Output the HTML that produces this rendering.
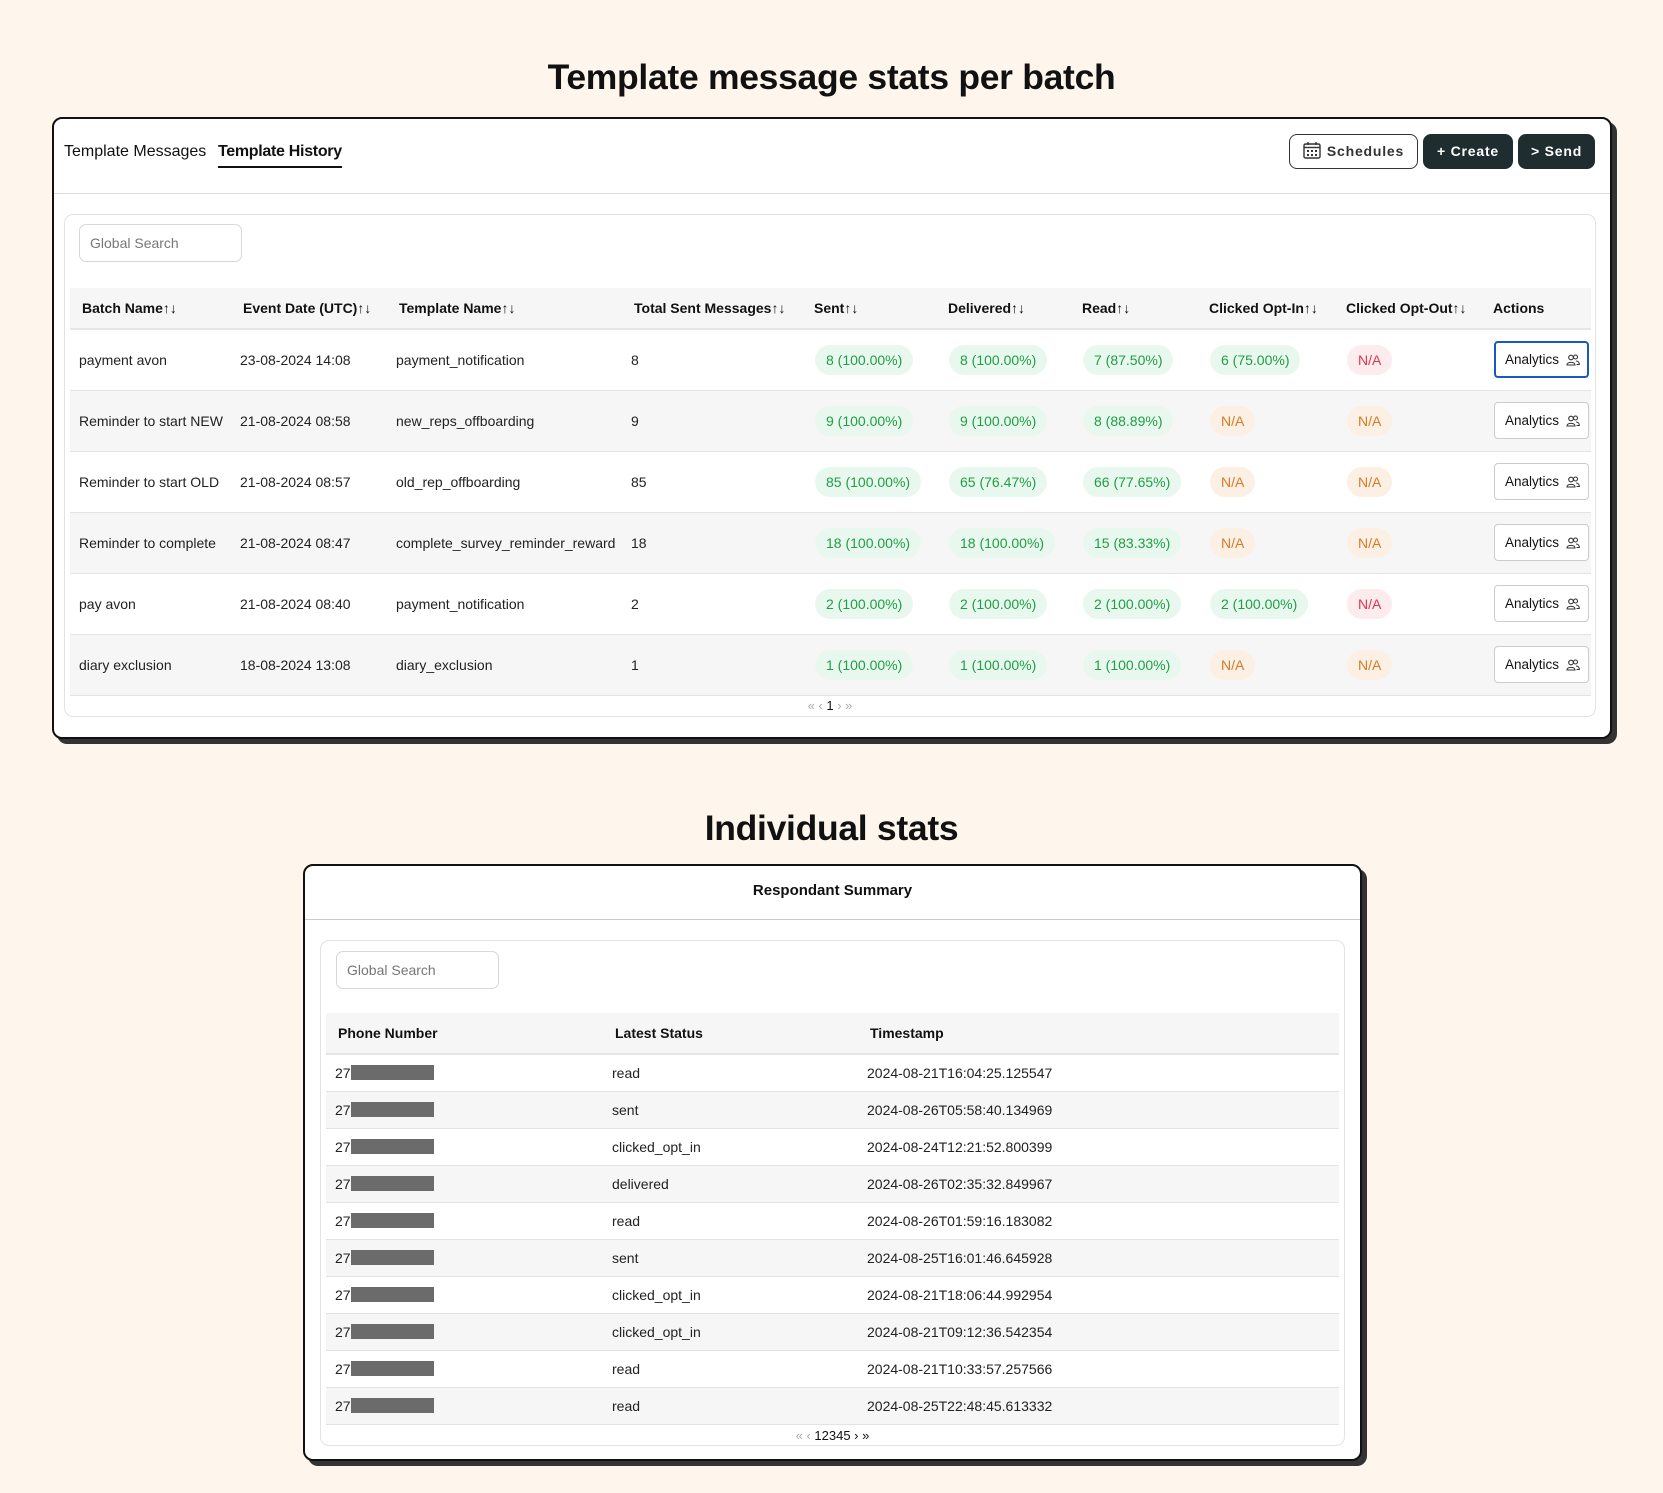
<!DOCTYPE html>
<html><head><meta charset="utf-8"><style>
*{box-sizing:border-box;margin:0;padding:0}
body{width:1663px;height:1493px;background:#fef6ec;font-family:"Liberation Sans",sans-serif;color:#222;position:relative;overflow:hidden}
.abs{position:absolute}
h1{position:absolute;left:0;width:1663px;text-align:center;font-size:35.5px;font-weight:700;color:#111;letter-spacing:-0.3px}
.card{position:absolute;background:#fff;border:2px solid #111;border-radius:10px;box-shadow:5px 5px 0 #333}
.inner{position:absolute;border:1px solid #e3e3e3;border-radius:9px;background:#fff}
.search{position:absolute;border:1px solid #d8d8d8;border-radius:7px;font-size:14px;color:#777;padding-left:10px;line-height:36px;height:38px;width:163px}
table{position:absolute;border-collapse:collapse;table-layout:fixed;font-size:14px}
th{text-align:left;font-weight:700;color:#111;background:#f6f6f6;height:41px;border-bottom:2px solid #e6e6e6;padding-left:12px;font-size:14px}
td{padding-left:9px;border-bottom:1px solid #e3e3e3;color:#222}
tr.g td{background:#f6f6f6}
.t1 td{height:61px}
.t1 td.p{padding-left:13px}
.pill{display:inline-block;height:30px;line-height:30px;padding:0 11px;border-radius:15px;font-size:14px}
.gr{background:#e9f8ee;color:#1f9e45}
.rd{background:#fdecee;color:#e0364a}
.or{background:#fcf0e4;color:#d47b27}
.an{display:inline-block;width:95px;height:37px;border:1px solid #ccc;border-radius:4px;line-height:35px;padding-left:10px;font-size:13.5px;color:#111;background:#fff}
.an.f{border:2px solid #1a56c4;line-height:33px;padding-left:9px}
.an svg{vertical-align:-2px;margin-left:3px}
.t2 td{height:37px;padding-left:9px}
.red{display:inline-block;width:83px;height:15px;background:#6b6b6b;vertical-align:-2px}
.btn{position:absolute;height:35px;border-radius:8px;font-size:14px;font-weight:700;letter-spacing:0.8px;line-height:33px;text-align:center}
.ar{font-weight:400}
</style></head><body>
<svg width="0" height="0" style="position:absolute"><defs><symbol id="pp" viewBox="0 0 14 12"><circle cx="5" cy="3.5" r="2.3" fill="none" stroke="#333" stroke-width="1.1"/><path d="M1 11 C1 7.5 9 7.5 9 11 Z" fill="none" stroke="#333" stroke-width="1.1"/><circle cx="9.5" cy="3" r="2" fill="none" stroke="#333" stroke-width="1.1"/><path d="M10 7 C12 7 13.3 8.5 13.3 10.5 L10.5 10.5" fill="none" stroke="#333" stroke-width="1.1"/></symbol></defs></svg>
<h1 style="top:57px">Template message stats per batch</h1>
<div class="card" style="left:52px;top:117px;width:1560px;height:622px">
 <div class="abs" style="left:10px;top:24px;font-size:16px;color:#111">Template Messages</div>
 <div class="abs" style="left:164px;top:24px;font-size:16px;font-weight:700;color:#111;border-bottom:2px solid #111;padding-bottom:5px;letter-spacing:-0.3px">Template History</div>
 <div class="btn" style="left:1235px;top:15px;width:129px;border:1px solid #333;color:#333;background:#fff">
  <svg width="18" height="17" viewBox="0 0 18 17" style="vertical-align:-3px;margin-right:6px"><rect x="1" y="2" width="16" height="14" rx="1.5" fill="none" stroke="#333" stroke-width="1.4"/><line x1="1" y1="5.5" x2="17" y2="5.5" stroke="#333" stroke-width="1.4"/><line x1="5" y1="0" x2="5" y2="3" stroke="#333" stroke-width="1.4"/><line x1="13" y1="0" x2="13" y2="3" stroke="#333" stroke-width="1.4"/><g fill="#333"><rect x="4" y="8" width="2" height="2"/><rect x="8" y="8" width="2" height="2"/><rect x="12" y="8" width="2" height="2"/><rect x="4" y="12" width="2" height="2"/><rect x="8" y="12" width="2" height="2"/><rect x="12" y="12" width="2" height="2"/></g></svg>Schedules</div>
 <div class="btn" style="left:1369px;top:15px;width:90px;background:#1f2d30;color:#fff;line-height:35px">+ Create</div>
 <div class="btn" style="left:1464px;top:15px;width:77px;background:#1f2d30;color:#fff;line-height:35px">&gt; Send</div>
 <div class="abs" style="left:0;top:74px;width:1556px;border-top:1px solid #ddd"></div>
 <div class="inner" style="left:10px;top:95px;width:1532px;height:503px">
  <div class="search" style="left:14px;top:9px">Global Search</div>
  <table class="t1" style="left:5px;top:73px;width:1521px">
   <colgroup><col style="width:161px"><col style="width:156px"><col style="width:235px"><col style="width:180px"><col style="width:134px"><col style="width:134px"><col style="width:127px"><col style="width:137px"><col style="width:147px"><col style="width:110px"></colgroup>
   <tr><th>Batch Name↑↓</th><th>Event Date (UTC)↑↓</th><th>Template Name↑↓</th><th>Total Sent Messages↑↓</th><th>Sent↑↓</th><th>Delivered↑↓</th><th>Read↑↓</th><th>Clicked Opt-In↑↓</th><th>Clicked Opt-Out↑↓</th><th>Actions</th></tr>
   <tr><td>payment avon</td><td>23-08-2024 14:08</td><td>payment_notification</td><td>8</td><td class="p"><span class="pill gr">8 (100.00%)</span></td><td class="p"><span class="pill gr">8 (100.00%)</span></td><td class="p"><span class="pill gr">7 (87.50%)</span></td><td class="p"><span class="pill gr">6 (75.00%)</span></td><td class="p"><span class="pill rd">N/A</span></td><td class="p"><span class="an f">Analytics <svg width="14" height="12"><use href="#pp"/></svg></span></td></tr>
   <tr class="g"><td>Reminder to start NEW</td><td>21-08-2024 08:58</td><td>new_reps_offboarding</td><td>9</td><td class="p"><span class="pill gr">9 (100.00%)</span></td><td class="p"><span class="pill gr">9 (100.00%)</span></td><td class="p"><span class="pill gr">8 (88.89%)</span></td><td class="p"><span class="pill or">N/A</span></td><td class="p"><span class="pill or">N/A</span></td><td class="p"><span class="an">Analytics <svg width="14" height="12"><use href="#pp"/></svg></span></td></tr>
   <tr><td>Reminder to start OLD</td><td>21-08-2024 08:57</td><td>old_rep_offboarding</td><td>85</td><td class="p"><span class="pill gr">85 (100.00%)</span></td><td class="p"><span class="pill gr">65 (76.47%)</span></td><td class="p"><span class="pill gr">66 (77.65%)</span></td><td class="p"><span class="pill or">N/A</span></td><td class="p"><span class="pill or">N/A</span></td><td class="p"><span class="an">Analytics <svg width="14" height="12"><use href="#pp"/></svg></span></td></tr>
   <tr class="g"><td>Reminder to complete</td><td>21-08-2024 08:47</td><td>complete_survey_reminder_reward</td><td>18</td><td class="p"><span class="pill gr">18 (100.00%)</span></td><td class="p"><span class="pill gr">18 (100.00%)</span></td><td class="p"><span class="pill gr">15 (83.33%)</span></td><td class="p"><span class="pill or">N/A</span></td><td class="p"><span class="pill or">N/A</span></td><td class="p"><span class="an">Analytics <svg width="14" height="12"><use href="#pp"/></svg></span></td></tr>
   <tr><td>pay avon</td><td>21-08-2024 08:40</td><td>payment_notification</td><td>2</td><td class="p"><span class="pill gr">2 (100.00%)</span></td><td class="p"><span class="pill gr">2 (100.00%)</span></td><td class="p"><span class="pill gr">2 (100.00%)</span></td><td class="p"><span class="pill gr">2 (100.00%)</span></td><td class="p"><span class="pill rd">N/A</span></td><td class="p"><span class="an">Analytics <svg width="14" height="12"><use href="#pp"/></svg></span></td></tr>
   <tr class="g"><td>diary exclusion</td><td>18-08-2024 13:08</td><td>diary_exclusion</td><td>1</td><td class="p"><span class="pill gr">1 (100.00%)</span></td><td class="p"><span class="pill gr">1 (100.00%)</span></td><td class="p"><span class="pill gr">1 (100.00%)</span></td><td class="p"><span class="pill or">N/A</span></td><td class="p"><span class="pill or">N/A</span></td><td class="p"><span class="an">Analytics <svg width="14" height="12"><use href="#pp"/></svg></span></td></tr>
  </table>
  <div class="abs" style="left:0;top:483px;width:1530px;text-align:center;font-size:13px;color:#aaa">«&nbsp;‹ <span style="color:#111">1</span> ›&nbsp;»</div>
 </div>
</div>

<h1 style="top:808px">Individual stats</h1>
<div class="card" style="left:303px;top:864px;width:1059px;height:597px">
 <div class="abs" style="left:0;top:16px;width:1055px;text-align:center;font-size:15px;font-weight:700;color:#111">Respondant Summary</div>
 <div class="abs" style="left:0;top:53px;width:1055px;border-top:1px solid #ccc"></div>
 <div class="inner" style="left:15px;top:74px;width:1025px;height:506px">
  <div class="search" style="left:15px;top:10px">Global Search</div>
  <table class="t2" style="left:5px;top:72px;width:1013px">
   <colgroup><col style="width:277px"><col style="width:255px"><col style="width:481px"></colgroup>
   <tr><th>Phone Number</th><th>Latest Status</th><th>Timestamp</th></tr>
   <tr><td>27<span class="red"></span></td><td>read</td><td>2024-08-21T16:04:25.125547</td></tr>
   <tr class="g"><td>27<span class="red"></span></td><td>sent</td><td>2024-08-26T05:58:40.134969</td></tr>
   <tr><td>27<span class="red"></span></td><td>clicked_opt_in</td><td>2024-08-24T12:21:52.800399</td></tr>
   <tr class="g"><td>27<span class="red"></span></td><td>delivered</td><td>2024-08-26T02:35:32.849967</td></tr>
   <tr><td>27<span class="red"></span></td><td>read</td><td>2024-08-26T01:59:16.183082</td></tr>
   <tr class="g"><td>27<span class="red"></span></td><td>sent</td><td>2024-08-25T16:01:46.645928</td></tr>
   <tr><td>27<span class="red"></span></td><td>clicked_opt_in</td><td>2024-08-21T18:06:44.992954</td></tr>
   <tr class="g"><td>27<span class="red"></span></td><td>clicked_opt_in</td><td>2024-08-21T09:12:36.542354</td></tr>
   <tr><td>27<span class="red"></span></td><td>read</td><td>2024-08-21T10:33:57.257566</td></tr>
   <tr class="g"><td>27<span class="red"></span></td><td>read</td><td>2024-08-25T22:48:45.613332</td></tr>
  </table>
  <div class="abs" style="left:0;top:487px;width:1023px;text-align:center;font-size:13px;color:#aaa">«&nbsp;‹ <span style="color:#111">12345 › »</span></div>
 </div>
</div>
</body></html>
